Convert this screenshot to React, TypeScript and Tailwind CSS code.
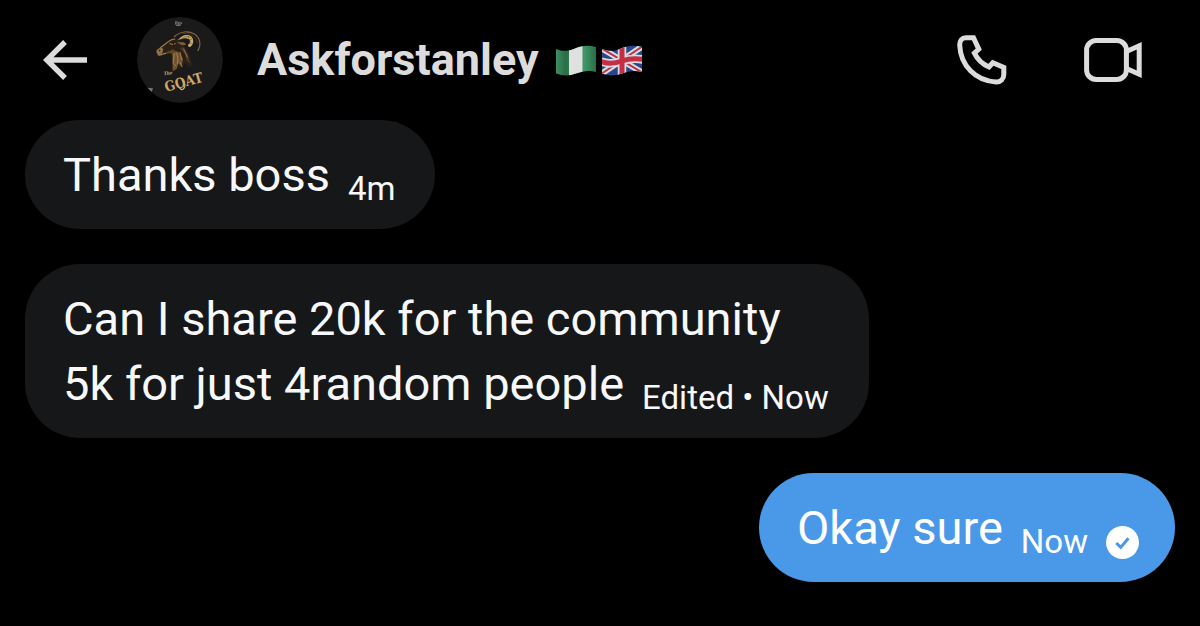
import React from "react";

type Message = {
  id: number;
  lines: string[];
  meta: string;
  mine?: boolean;
};

const messages: Message[] = [
  { id: 1, lines: ["Thanks boss"], meta: "4m" },
  {
    id: 2,
    lines: ["Can I share 20k for the community", "5k for just 4random people"],
    meta: "Edited • Now",
  },
  { id: 3, lines: ["Okay sure"], meta: "Now", mine: true },
];

function BackIcon() {
  return (
    <svg className="h-10 w-11" viewBox="0 0 44 40" fill="none" stroke="currentColor" strokeWidth="5.4" aria-hidden="true">
      <path d="M22 2 3.800 20 22 38M3.800 20H44" />
    </svg>
  );
}

function PhoneIcon() {
  return (
    <svg className="size-[50px]" viewBox="0 0 50 50" fill="none" stroke="currentColor" strokeWidth="5" aria-hidden="true">
      <path d="M8.700 2.700H16.500L21.800 14.200 17.400 18.200C20.500 24.500 25.500 29.300 32 32L35.800 27.800 46.800 32.400V39.500C46.800 43.900 43.600 47.200 39.200 47C18.500 46 3.500 30.500 2.700 10C2.500 5.700 5 2.700 8.700 2.700Z" />
    </svg>
  );
}

function VideoIcon() {
  return (
    <svg className="h-11 w-[58px]" viewBox="0 0 58 44" fill="none" stroke="currentColor" strokeWidth="5" aria-hidden="true">
      <rect x="2.600" y="2.600" width="39.800" height="38.800" rx="9.500" />
      <path d="M43 13.200 55.200 7.800v28.400L43 30.800" />
    </svg>
  );
}

function Avatar() {
  return (
    <svg className="size-[86px] rounded-full" viewBox="20 20 258 258" role="img" aria-label="The Goat">
      <circle cx="149" cy="149" r="129" fill="#1b1a1b" />
      <g stroke="#7d7b79" strokeWidth="3">
        <path d="M136 33v10M140 32v11M145 35v11M149 34v10M154 36v5M137 45h14" />
      </g>
      <path d="M51 232l17 2-4 11Z" fill="#77716b" />
      <path
        d="M78 124c0-7 5-12 12-14l23-17c7-6 15-10 24-9l16 8 12 18c8 14 14 24 17 36l5 22-14 2-8-12-12 14-27 8c-2-16 2-28 1-42l-12-10-16 2-15 6c-5-2-8-8-6-12Z"
        fill="#2a2018"
      />
      <path d="M79 119l12-8 8 5-3 12-10 6c-6-1-9-8-7-15Z" fill="#8f7049" />
      <path d="M108 126l20-9 11 8-8 9-12-6-14 3Z" fill="#5e4528" />
      <path d="M126 131l11-9 11 5 10 19-4 24-10-11-5 17-12 7Z" fill="#6f522f" />
      <path d="M148 113l11-3 14 24 6 26-10-9-5-20Z" fill="#4a3722" />
      <g fill="none" stroke="#a8814e" strokeLinecap="round">
        <path d="M92 111l22-17c6-5 12-8 19-8M84 134c8 2 13-4 22-5" strokeWidth="3.500" />
        <path d="M119 100l9 3 7-3M132 129l-3 26M139 128l4 17-2 16M149 126l5 22" strokeWidth="3" />
        <path d="M160 116l11 24M128 158l9 9M149 156l6 13" strokeWidth="2.500" />
      </g>
      <path d="M86 121l4-1M128 103l3 1" stroke="#17120e" strokeWidth="4" />
      <path d="M139 96l16 9 13-2-7-7Z" fill="#7d6039" />
      <path
        d="M142 90c9-15 29-21 40-12 10 8 9 25-3 32-4 0-6-3-6-7 8-3 9-13 2-17-10-5-23-1-33 4Z"
        fill="#cbaa70"
      />
      <path d="M152 87c10-8 21-11 29-4M174 76l1 8M185 86l-8 4M184 99l-8-2" fill="none" stroke="#735834" strokeWidth="2" />
      <path d="M131 80c18-17 43-20 61-9 17 11 22 31 10 51" fill="none" stroke="#82673f" strokeWidth="3.500" />
      <path d="M157 70c22-4 40 8 44 29" fill="none" stroke="#44341f" strokeWidth="3" />
      <g fill="#cda869" fontFamily="'DejaVu Serif Condensed', 'DejaVu Serif', serif" fontWeight="bold">
        <text x="101" y="195" fontSize="14" fontStyle="italic" transform="rotate(-8 101 195)">The</text>
        <text x="107" y="244" fontSize="41" transform="rotate(-15 107 244)">GOAT</text>
      </g>
      <path d="M147 231c7 13 17 5 17-9" fill="none" stroke="#cda869" strokeWidth="4" />
    </svg>
  );
}

const flagShape = "M1 4C8 7 14 6 20 3.500 27 .5 34 0 41 2v25c-7-2-13-1-20 1.500C14 31 8 31 1 28.500Z";

function NigeriaFlag() {
  return (
    <svg className="h-[31px] w-[42px]" viewBox="0 0 42 31" role="img" aria-label="Flag of Nigeria">
      <clipPath id="ng-shape"><path d={flagShape} /></clipPath>
      <linearGradient id="ng-shade">
        <stop offset="0" stopColor="#3f9263" />
        <stop offset=".25" stopColor="#286e48" />
        <stop offset=".7" stopColor="#3f9766" />
        <stop offset="1" stopColor="#276a44" />
      </linearGradient>
      <g clipPath="url(#ng-shape)">
        <rect width="42" height="31" fill="url(#ng-shade)" />
        <rect x="14" width="13.500" height="31" fill="#dfe1df" />
      </g>
    </svg>
  );
}

function UnitedKingdomFlag() {
  return (
    <svg className="h-[31px] w-[42px]" viewBox="0 0 42 31" role="img" aria-label="Flag of the United Kingdom">
      <clipPath id="uk-shape"><path d={flagShape} /></clipPath>
      <g clipPath="url(#uk-shape)" fill="none">
        <rect width="42" height="31" fill="#29468b" />
        <path d="M0 3 42 28M0 29 42 1" stroke="#dadce2" strokeWidth="6" />
        <path d="M0 3 42 28M0 29 42 1" stroke="#b83243" strokeWidth="2" />
        <path d="M21 0v31M0 16.500c8 3 14 2 21-.5s13-3 21-1.500" stroke="#dadce2" strokeWidth="8.500" />
        <path d="M21 0v31M0 16.500c8 3 14 2 21-.5s13-3 21-1.500" stroke="#c52f43" strokeWidth="5" />
      </g>
    </svg>
  );
}

function SentBadge() {
  return (
    <svg className="size-[33px]" viewBox="0 0 33 33" role="img" aria-label="Sent">
      <circle cx="16.500" cy="16.500" r="16.500" fill="#fff" />
      <path d="m10.300 17 4.400 4.400 7.700-9.200" fill="none" stroke="#4a99e9" strokeWidth="3" />
    </svg>
  );
}

function Bubble({ message }: { message: Message }) {
  const { lines, meta, mine } = message;
  const last = lines.length - 1;
  return (
    <li
      className={
        mine
          ? "max-w-full self-end rounded-[55px] bg-[#4a99e9] py-[22px] pr-9 pl-[38px] text-white"
          : "max-w-full self-start rounded-[55px] bg-[#161719] py-[22px] pr-10 pl-[38px] text-[#f7f8f9]"
      }
    >
      {lines.slice(0, last).map((line) => (
        <p key={line}>{line}</p>
      ))}
      <div className="flex items-end gap-[18px]">
        <p>{lines[last]}</p>
        <div className="flex items-center gap-[18px] text-[33px] leading-9 whitespace-nowrap">
          <span>{meta}</span>
          {mine && <SentBadge />}
        </div>
      </div>
    </li>
  );
}

export default function App() {
  return (
    <div className="min-h-screen bg-black font-['Roboto',sans-serif]">
      <header className="flex h-[120px] items-center pr-[58px] pl-[43px] text-[#dcdcdc]">
        <button type="button" aria-label="Back" className="shrink-0">
          <BackIcon />
        </button>
        <div className="ml-[50px] shrink-0">
          <Avatar />
        </div>
        <div className="ml-[34px] flex min-w-0 flex-1 items-center gap-4">
          <h1 className="text-[45px] leading-[60px] font-bold">Askforstanley</h1>
          <span className="flex gap-1">
            <NigeriaFlag />
            <UnitedKingdomFlag />
          </span>
        </div>
        <div className="flex shrink-0 items-center gap-[77px]">
          <button type="button" aria-label="Voice call">
            <PhoneIcon />
          </button>
          <button type="button" aria-label="Video call">
            <VideoIcon />
          </button>
        </div>
      </header>
      <main>
        <ul className="flex flex-col gap-[35px] px-[25px] pb-11 text-[47px] leading-[65px]">
          {messages.map((message) => (
            <Bubble key={message.id} message={message} />
          ))}
        </ul>
      </main>
    </div>
  );
}
